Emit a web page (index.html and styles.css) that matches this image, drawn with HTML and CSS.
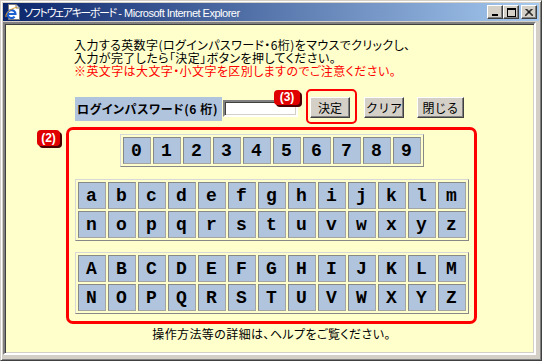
FILE: index.html
```html
<!DOCTYPE html>
<html lang="ja">
<head>
<meta charset="utf-8">
<title>ソフトウェアキーボード</title>
<link rel="stylesheet" href="styles.css">
</head>
<body>
<div class="window">
  <div class="titlebar">
    <svg class="app-icon" width="16" height="16" viewBox="0 0 16 16">
      <polygon points="3.5,0.5 11,0.5 14.5,4 14.5,15.5 3.5,15.5" fill="#ffffff" stroke="#7a7a7a"/>
      <polyline points="11,0.5 11,4 14.5,4" fill="#e0e0e0" stroke="#7a7a7a"/>
      <path d="M2.5,10 H10.5 A4,4 0 1 0 9.6,12.6" fill="none" stroke="#1d5fd0" stroke-width="2.2"/>
      <path d="M1,13 C0,9 6,4 12,3.5" fill="none" stroke="#e8a020" stroke-width="1"/>
    </svg>
    <span class="title"><span class="title-ja">ソフトウェアキーボード</span> - Microsoft Internet Explorer</span>
    <div class="controls">
      <span class="cbtn"><svg width="8" height="7" viewBox="0 0 8 7"><rect x="1" y="5" width="6" height="2" fill="#000"/></svg></span>
      <span class="cbtn"><svg width="9" height="9" viewBox="0 0 9 9"><rect x="0.5" y="0.5" width="8" height="8" fill="none" stroke="#000"/><rect x="0" y="0" width="9" height="2" fill="#000"/></svg></span>
      <span class="cbtn cbtn-close"><svg width="8" height="7" viewBox="0 0 8 7"><path d="M0.5,0 L7.5,7 M7.5,0 L0.5,7 M1.5,0 L8.5,7 M6.5,0 L-0.5,7" stroke="#000" stroke-width="1"/></svg></span>
    </div>
  </div>
  <div class="viewport">
    <div class="page">
      <p class="intro">入力する英数字(ログインパスワード・6桁)をマウスでクリックし、<br>入力が完了したら「決定」ボタンを押してください。<br><span class="warn">※英文字は大文字・小文字を区別しますのでご注意ください。</span></p>
      <div class="login-row">
        <span class="label">ログインパスワード(6 桁)</span>
        <input class="pw" type="password">
        <span class="badge badge-3">(3)</span>
        <div class="ok-wrap"><button class="btn btn-ok">決定</button></div>
        <button class="btn btn-clear">クリア</button>
        <button class="btn btn-close">閉じる</button>
      </div>
      <div class="keypad">
        <span class="badge badge-2">(2)</span>
        <div class="keys digits">
          <span class="key">0</span><span class="key">1</span><span class="key">2</span><span class="key">3</span><span class="key">4</span><span class="key">5</span><span class="key">6</span><span class="key">7</span><span class="key">8</span><span class="key">9</span>
        </div>
        <div class="keys letters lower">
          <span class="key">a</span><span class="key">b</span><span class="key">c</span><span class="key">d</span><span class="key">e</span><span class="key">f</span><span class="key">g</span><span class="key">h</span><span class="key">i</span><span class="key">j</span><span class="key">k</span><span class="key">l</span><span class="key">m</span>
          <span class="key">n</span><span class="key">o</span><span class="key">p</span><span class="key">q</span><span class="key">r</span><span class="key">s</span><span class="key">t</span><span class="key">u</span><span class="key">v</span><span class="key">w</span><span class="key">x</span><span class="key">y</span><span class="key">z</span>
        </div>
        <div class="keys letters upper">
          <span class="key">A</span><span class="key">B</span><span class="key">C</span><span class="key">D</span><span class="key">E</span><span class="key">F</span><span class="key">G</span><span class="key">H</span><span class="key">I</span><span class="key">J</span><span class="key">K</span><span class="key">L</span><span class="key">M</span>
          <span class="key">N</span><span class="key">O</span><span class="key">P</span><span class="key">Q</span><span class="key">R</span><span class="key">S</span><span class="key">T</span><span class="key">U</span><span class="key">V</span><span class="key">W</span><span class="key">X</span><span class="key">Y</span><span class="key">Z</span>
        </div>
      </div>
      <p class="footer">操作方法等の詳細は、ヘルプをご覧ください。</p>
    </div>
  </div>
</div>
</body>
</html>
```
FILE: styles.css
```css
* { box-sizing: border-box; }
html, body { margin: 0; padding: 0; background: #d4d0c8; }
body { width: 542px; height: 361px; overflow: hidden; font-family: "Noto Sans CJK JP", "Liberation Sans", sans-serif; }

.window {
  width: 542px;
  height: 361px;
  background: #d4d0c8;
  border: 1px solid;
  border-color: #d4d0c8 #404040 #404040 #d4d0c8;
  box-shadow: inset 1px 1px #ffffff, inset -1px -1px #808080;
  padding: 2px;
  display: flex;
  flex-direction: column;
}

.titlebar {
  height: 18px;
  background: linear-gradient(to right, #0a246a, #a6caf0);
  display: flex;
  align-items: center;
  padding-left: 2px;
  padding-right: 2px;
}
.app-icon { flex: none; margin-right: 3px; }
.title {
  color: #ffffff;
  font-family: "Liberation Sans", "Noto Sans CJK JP", sans-serif;
  font-size: 11px;
  line-height: 18px;
  letter-spacing: -0.5px;
  white-space: nowrap;
  flex: 1;
}
.title-ja {
  font-family: "Noto Sans CJK JP", sans-serif;
  font-feature-settings: "palt";
  letter-spacing: -1.4px;
}
.controls { display: flex; align-items: center; }
.cbtn {
  width: 16px;
  height: 14px;
  background: #d4d0c8;
  border: 1px solid;
  border-color: #ffffff #404040 #404040 #ffffff;
  box-shadow: inset -1px -1px #808080;
  display: flex;
  align-items: center;
  justify-content: center;
}
.cbtn svg { display: block; }
.cbtn-close { margin-left: 2px; }

.viewport {
  margin-top: 1px;
  margin-right: 3px;
  height: 333px;
  background: #ffffcc;
  border: 2px solid;
  border-color: #808080 #ffffff #ffffff #808080;
  box-shadow: inset 1px 1px #404040, inset -1px -1px #d4d0c8;
  overflow: hidden;
}

.page {
  margin-left: 61px;
  width: 411px;
  padding-top: 14px;
  font-size: 12px;
  color: #000;
}

.intro {
  margin: 0;
  padding-left: 8px;
  line-height: 13px;
  letter-spacing: 0.4px;
  font-feature-settings: "palt";
  white-space: nowrap;
}
.warn { color: #ff0000; }

.login-row {
  position: relative;
  margin-top: 12px;
  height: 35px;
  display: flex;
  align-items: flex-start;
  padding-left: 9px;
}
.label {
  margin-top: 8px;
  width: 147px;
  height: 24px;
  background: #b0c4de;
  font-weight: bold;
  line-height: 24px;
  padding-left: 2px;
  letter-spacing: 0.6px;
  white-space: nowrap;
  font-feature-settings: "palt";
}
.pw {
  margin: 11px 0 0 1px;
  width: 75px;
  height: 17px;
  background: #fff;
  border: 2px solid;
  border-color: #808080 #ffffff #ffffff #808080;
  box-shadow: inset 1px 1px #404040, inset -1px -1px #d4d0c8;
  padding: 0;
  outline: none;
}
.ok-wrap {
  margin-left: 8px;
  width: 51px;
  height: 35px;
  border: 2px solid #ff0000;
  border-radius: 5px;
  padding: 6px 0 0 2px;
}
.btn {
  height: 21px;
  padding: 0;
  background: #d4d0c8;
  border: 1px solid;
  border-color: #ffffff #404040 #404040 #ffffff;
  box-shadow: inset -1px -1px #808080;
  font-family: "Noto Sans CJK JP", sans-serif;
  font-size: 12px;
  line-height: 18px;
  color: #000;
}
.btn-ok { width: 40px; }
.btn-clear { width: 40px; margin: 8px 0 0 7px; }
.btn-close { width: 47px; margin: 8px 0 0 13px; }

.badge {
  position: absolute;
  background: #e00000;
  color: #fff;
  font-family: "Liberation Sans", Arial, sans-serif;
  font-weight: bold;
  font-size: 12px;
  line-height: 15px;
  text-align: center;
  border-radius: 4px;
  box-shadow: 2px 2px 0 #4a0000;
}
.badge-3 { left: 208px; top: 1px; width: 26px; height: 15px; }
.badge-2 { left: -32px; top: 0; width: 23px; height: 16px; line-height: 16px; }

.keypad {
  position: relative;
  margin-top: 3px;
  border: 3px solid #ff0000;
  border-radius: 7px;
  padding: 4px 0 7px;
  display: flex;
  flex-direction: column;
  align-items: center;
}
.keys {
  display: grid;
  grid-auto-rows: 27px;
  gap: 2px;
  padding: 2px;
  border: 1px solid;
  border-color: #d8d8d8 #888888 #888888 #d8d8d8;
}
.digits { grid-template-columns: repeat(10, 28px); }
.letters { grid-template-columns: repeat(13, 28px); }
.lower { margin-top: 12px; }
.upper { margin-top: 11px; }
.key {
  display: flex;
  align-items: center;
  justify-content: center;
  background: #b0c4de;
  border: 1px solid;
  border-color: #888888 #a4a4a4 #a4a4a4 #888888;
  font-family: "Liberation Mono", "Courier New", monospace;
  font-weight: bold;
  font-size: 18px;
  color: #000;
}

.footer {
  margin: 3px 0 0;
  text-align: center;
  line-height: 13px;
  letter-spacing: 0.4px;
  font-feature-settings: "palt";
}
```
